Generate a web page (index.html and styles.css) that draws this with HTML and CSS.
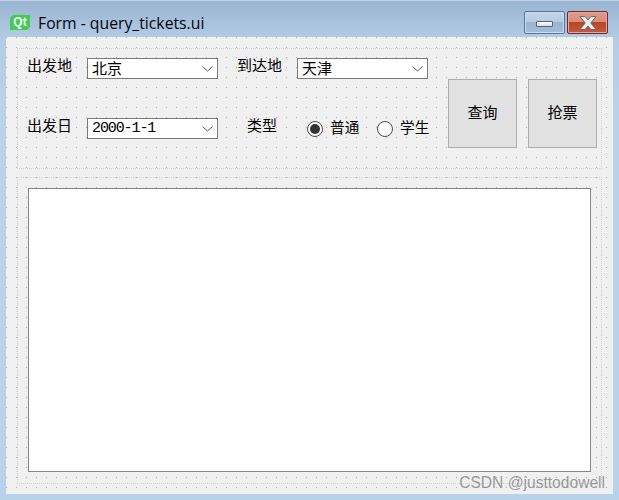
FILE: index.html
```html
<!DOCTYPE html>
<html lang="zh">
<head>
<meta charset="utf-8">
<title>Form - query_tickets.ui</title>
<link rel="stylesheet" href="styles.css">
</head>
<body>
<div class="window">
  <header class="titlebar">
    <span class="qt-logo">Qt</span>
    <span class="title">Form - query_tickets.ui</span>
    <div class="win-buttons">
      <div class="win-btn win-min"><span class="min-bar"></span></div>
      <div class="win-btn win-close">
        <svg width="22" height="16" viewBox="0 0 22 16"><path d="M3 1.500H8L11 5L14 1.500H19L13.800 8L19 14.500H14L11 11L8 14.500H3L8.200 8Z" fill="#eceef0" stroke="#6f6a6e" stroke-width="1"/></svg>
      </div>
    </div>
  </header>
  <main class="form">
    <section class="layout layout-top">
      <div class="fields">
        <span class="label">出发地</span>
        <div class="combo"><span>北京</span><svg class="chev" width="11" height="6" viewBox="0 0 11 6"><path d="M0.500 0.500L5.500 5L10.500 0.500" fill="none" stroke="#555" stroke-width="1"/></svg></div>
        <span></span>
        <span class="label">到达地</span>
        <div class="combo"><span>天津</span><svg class="chev" width="11" height="6" viewBox="0 0 11 6"><path d="M0.500 0.500L5.500 5L10.500 0.500" fill="none" stroke="#555" stroke-width="1"/></svg></div>
        <span class="label">出发日</span>
        <div class="combo"><span class="mono">2000-1-1</span><svg class="chev" width="11" height="6" viewBox="0 0 11 6"><path d="M0.500 0.500L5.500 5L10.500 0.500" fill="none" stroke="#555" stroke-width="1"/></svg></div>
        <span></span>
        <span class="label label-inset">类型</span>
        <div class="radios">
          <span class="radio radio-on"></span><span class="radio-text">普通</span>
          <span class="radio"></span><span class="radio-text">学生</span>
        </div>
      </div>
      <div class="actions">
        <div class="btn">查询</div>
        <div class="btn">抢票</div>
      </div>
    </section>
    <section class="layout layout-bottom">
      <div class="textedit"></div>
    </section>
  </main>
  <div class="watermark">CSDN @justtodowell</div>
</div>
</body>
</html>
```

FILE: styles.css
```css
* { box-sizing: border-box; }
html, body { margin: 0; padding: 0; }
body { font-family: "Noto Sans CJK SC", "Liberation Sans", sans-serif; color: #000; background: #b9d1ea; }

.window {
  position: relative;
  width: 619px;
  height: 500px;
  display: flex;
  flex-direction: column;
  overflow: hidden;
  background: linear-gradient(#99b4d1 0, #b3cbe5 37px, #b9d1ea 100px);
  border-top: 1px solid #c4d3e3;
}

.titlebar {
  height: 36px;
  flex: none;
  display: flex;
  align-items: flex-start;
  padding: 10px 11px 0 10px;
}
.qt-logo {
  width: 20px;
  height: 15px;
  margin-top: 4px;
  background: #41cd52;
  color: #fff;
  font: bold 12px/15px "Liberation Sans", sans-serif;
  text-align: center;
  clip-path: polygon(3px 0, 100% 0, 100% calc(100% - 3px), calc(100% - 3px) 100%, 0 100%, 0 3px);
}
.title {
  margin-left: 8px;
  font: 15.750px/24px "Open Sans", sans-serif;
  color: #04060c;
  flex: 1;
}
.win-buttons { display: flex; gap: 2px; }
.win-btn {
  width: 41px;
  height: 23px;
  border-radius: 2px;
  display: flex;
  align-items: center;
  justify-content: center;
}
.win-min {
  border: 1px solid #5c7397;
  background: linear-gradient(#c3d6ea 0, #b5cbe3 50%, #9ab4d2 50%, #a3bcd8 100%);
  box-shadow: inset 0 0 0 1px #c9dbee;
}
.min-bar {
  display: block;
  width: 17px;
  height: 6px;
  margin-top: 2px;
  background: linear-gradient(#fff, #d8dde4);
  border: 1px solid #55627a;
  border-radius: 1px;
}
.win-close {
  border: 1px solid #6c2a34;
  background: linear-gradient(#e39a8a 0, #da8a78 50%, #b9452a 50%, #c4593f 100%);
  box-shadow: inset 0 0 0 1px #e5a99b;
}

.form {
  width: 607px;
  height: 457px;
  margin-left: 6px;
  flex: none;
  padding: 11px 11px 0;
  display: flex;
  flex-direction: column;
  gap: 8px;
  background-color: #f0f0f0;
  background-image: conic-gradient(at 1px 1px, transparent 270deg, #b0b0b0 0);
  background-size: 10px 10px;
}
.layout { border: 1px dotted #d2d2d2; }
.layout-top {
  height: 121px;
  display: flex;
  align-items: flex-start;
  padding: 9px 0 0 9px;
}
.fields {
  display: grid;
  grid-template-columns: 60px 131px 19px 60px 131px;
  grid-auto-rows: 21px;
  row-gap: 39px;
}
.label {
  font-size: 15px;
  line-height: 14px;
  white-space: nowrap;
}
.label-inset { padding-left: 10px; }
.combo {
  height: 21px;
  padding: 0 4px;
  display: flex;
  align-items: center;
  justify-content: space-between;
  background: #fff;
  border: 1px solid #7a7a7a;
  font-size: 15px;
  line-height: 17px;
}
.combo > span { padding-bottom: 2px; }
.combo > .mono { padding-bottom: 0; }
.mono { font: 15px/19px "Liberation Mono", monospace; letter-spacing: -1.100px; }
.chev { flex: none; }
.radios {
  display: flex;
  align-items: center;
  padding-left: 10px;
}
.radio {
  position: relative;
  width: 16px;
  height: 16px;
  flex: none;
  border: 1px solid #4d4d4d;
  border-radius: 50%;
  background: #fff;
}
.radio-on::after {
  content: "";
  position: absolute;
  left: 2px;
  top: 2px;
  width: 10px;
  height: 10px;
  border-radius: 50%;
  background: #333;
}
.radio-text {
  margin: 0 17.660px 0 7px;
  padding-bottom: 4px;
  font-size: 14.670px;
  line-height: 18px;
  white-space: nowrap;
}
.actions {
  display: flex;
  gap: 11px;
  margin: 21px 0 0 20px;
}
.btn {
  width: 69px;
  height: 69px;
  display: flex;
  align-items: center;
  justify-content: center;
  padding-bottom: 4px;
  background: #e1e1e1;
  border: 1px solid #adadad;
  font-size: 15px;
}
.layout-bottom {
  height: 307px;
  padding: 10px;
}
.textedit {
  height: 284px;
  background: #fff;
  border: 1px solid #828790;
}
.watermark {
  position: absolute;
  right: 14px;
  bottom: 8px;
  font: 15.600px/18px "Liberation Sans", sans-serif;
  color: rgba(120, 120, 120, 0.75);
  white-space: nowrap;
}
```
